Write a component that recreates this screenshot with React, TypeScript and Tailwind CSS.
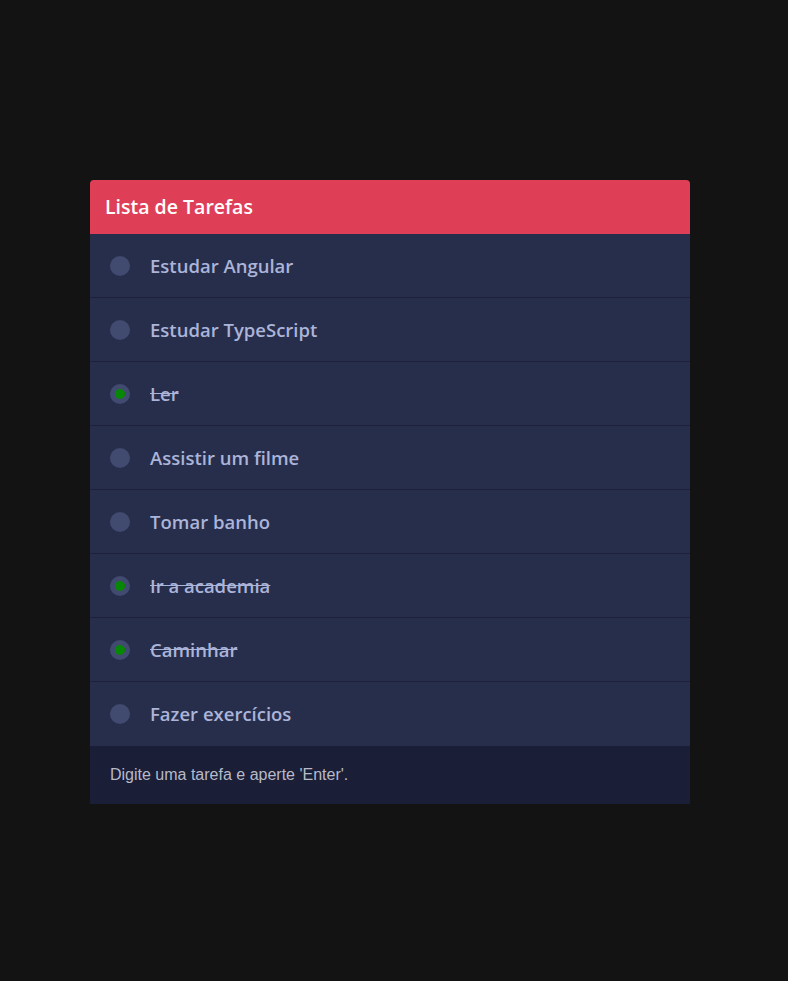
const tasks = [
  { text: 'Estudar Angular', done: false },
  { text: 'Estudar TypeScript', done: false },
  { text: 'Ler', done: true },
  { text: 'Assistir um filme', done: false },
  { text: 'Tomar banho', done: false },
  { text: 'Ir a academia', done: true },
  { text: 'Caminhar', done: true },
  { text: 'Fazer exercícios', done: false },
]

export default function App() {
  return (
    <div className="min-h-screen w-full bg-[#131313] pt-[180px]">
      <div className="ml-[90px] w-[600px] overflow-hidden rounded-t-[4px]">
        {/* Header */}
        <div className="flex h-[54px] items-center bg-[#df3f56] px-[15px]">
          <h1 className="font-['Open_Sans',sans-serif] text-[19.5px] font-semibold text-white">Lista de Tarefas</h1>
        </div>

        {/* Tasks */}
        <ul className="bg-[#272e4b]">
          {tasks.map((t, i) => (
            <li
              key={t.text}
              className={`flex h-[64px] items-center gap-5 px-5 ${i < tasks.length - 1 ? 'border-b border-[#1d2238]' : ''}`}
            >
              <span className="flex h-5 w-5 items-center justify-center rounded-full bg-[#414a6f]">
                {t.done && <span className="h-[10px] w-[10px] rounded-full bg-[#068806]" />}
              </span>
              <span
                className={`font-['Open_Sans',sans-serif] text-[18.5px] font-semibold text-[#abb4d9] ${t.done ? 'line-through' : ''}`}
              >
                {t.text}
              </span>
            </li>
          ))}
        </ul>

        {/* Input */}
        <div className="flex h-[58px] items-center bg-[#1a1e37] px-5">
          <input
            className="w-full bg-transparent font-['Liberation_Sans',Arial,sans-serif] text-[16px] text-[#c8cbd8] outline-none placeholder:text-[#b7bac8]"
            placeholder="Digite uma tarefa e aperte 'Enter'."
          />
        </div>
      </div>
    </div>
  )
}
